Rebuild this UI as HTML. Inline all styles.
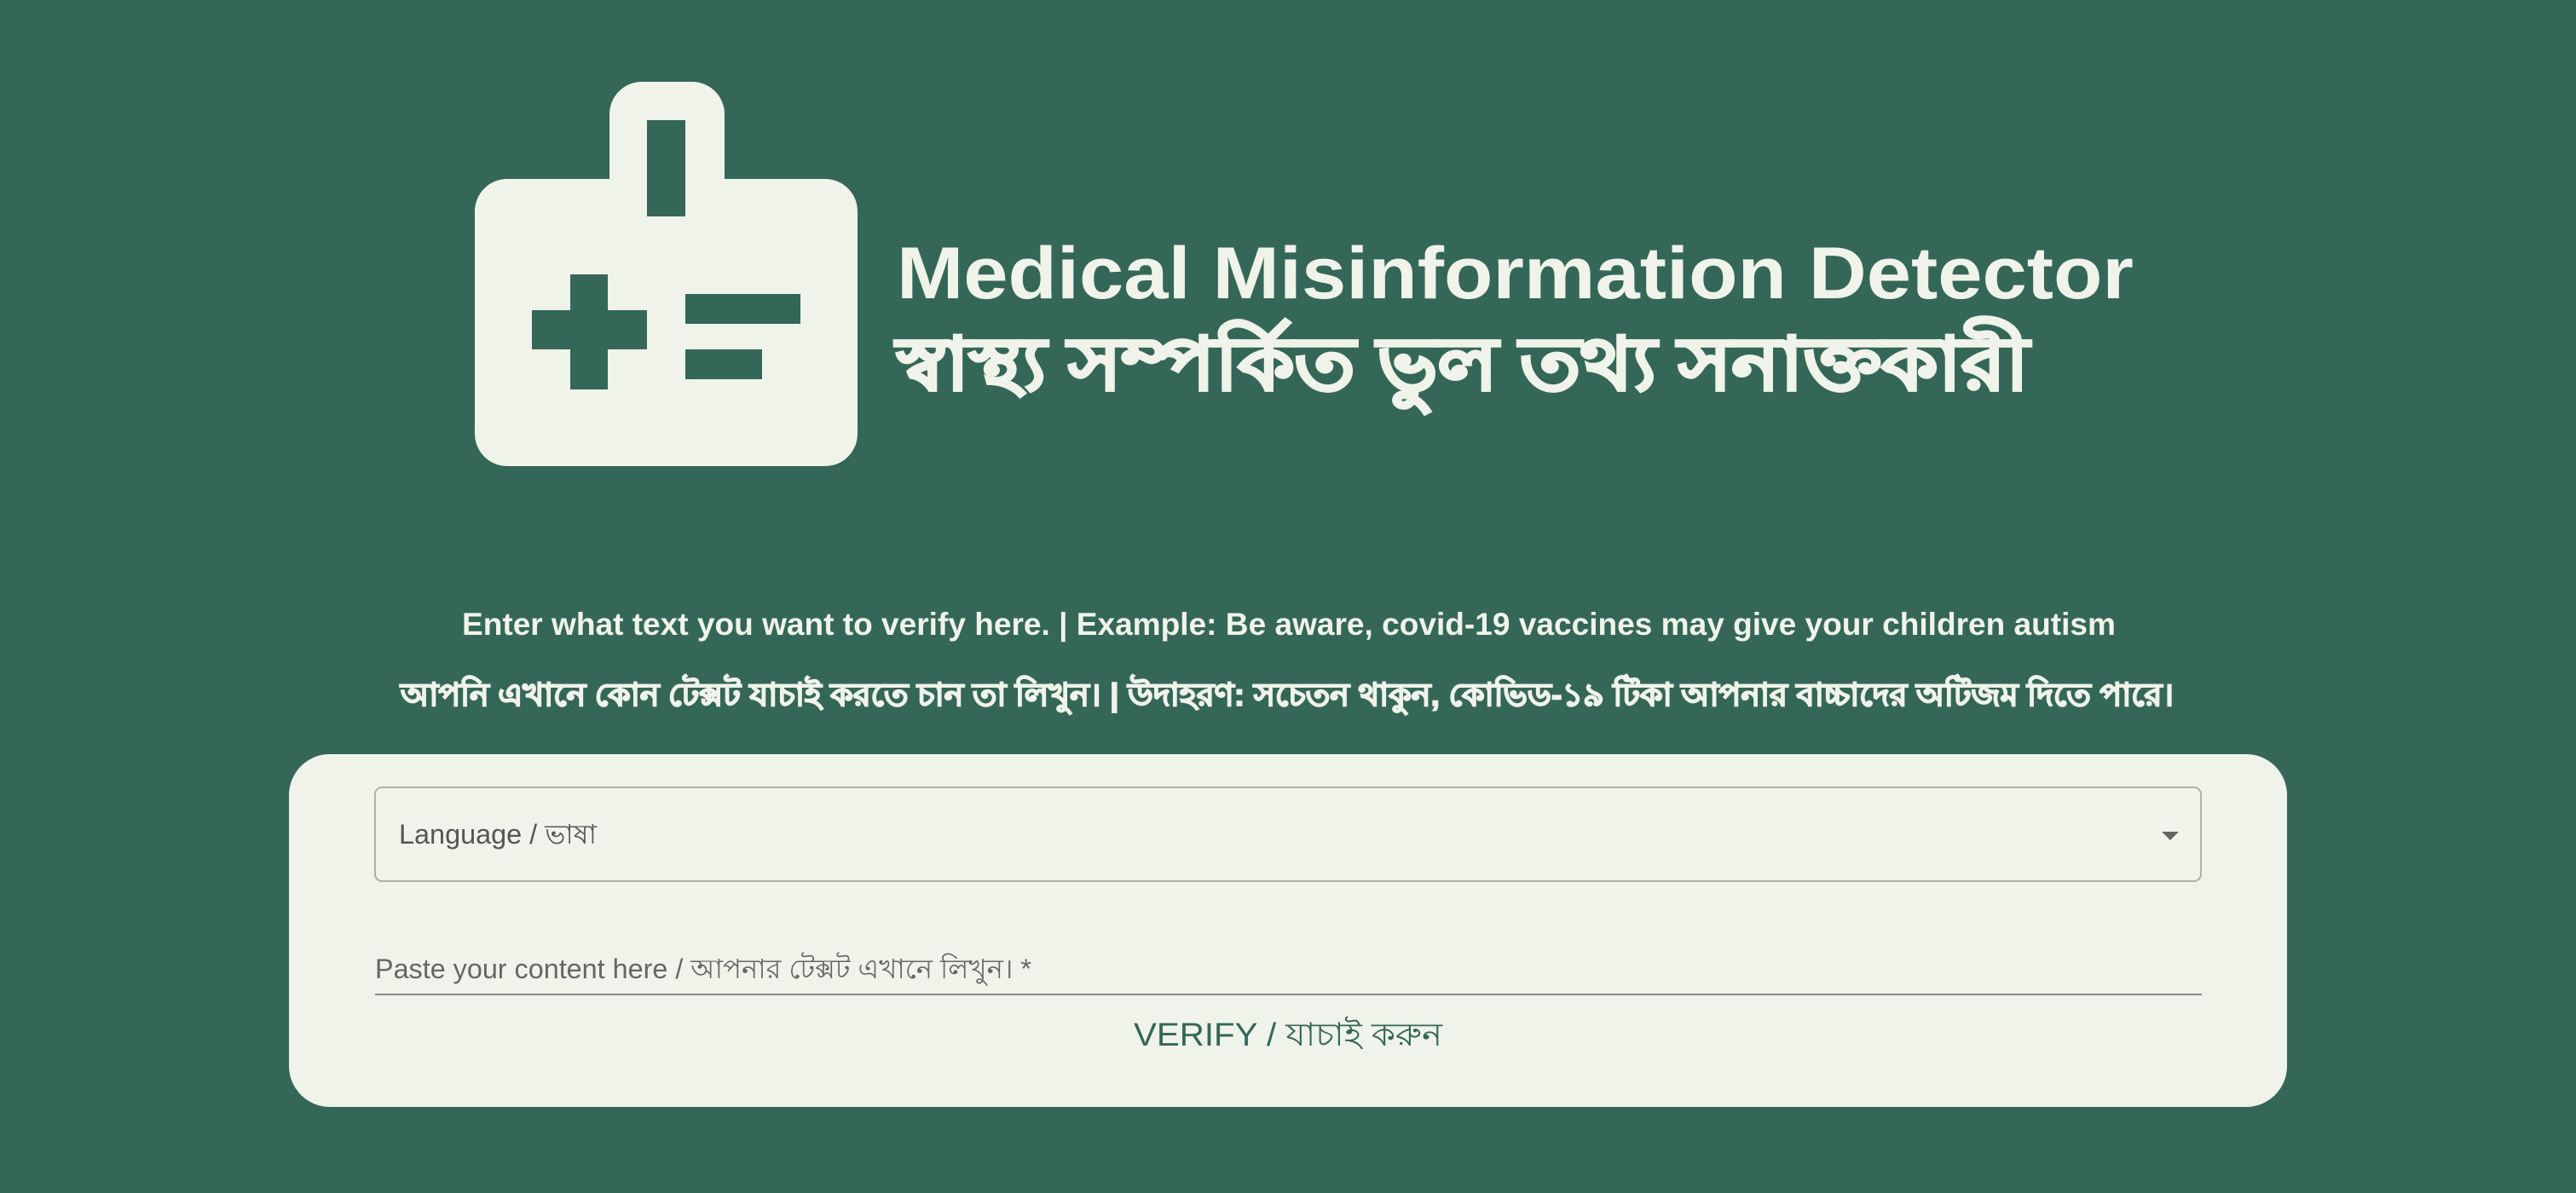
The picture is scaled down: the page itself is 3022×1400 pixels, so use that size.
<!DOCTYPE html>
<html><head><meta charset="utf-8"><style>
html,body{margin:0;padding:0;background:#356759;width:3022px;height:1400px;overflow:hidden}
svg{display:block}
text{font-family:"Liberation Sans","Noto Sans CJK SC",sans-serif}
</style></head><body>
<svg width="3022" height="1400" viewBox="0 0 3022 1400" xmlns="http://www.w3.org/2000/svg">
<rect width="3022" height="1400" fill="#356759"/>
<g fill="#f0f3e9">
<path d="M753 96 H812 A38 38 0 0 1 850 134 V215 H715 V134 A38 38 0 0 1 753 96 Z"/>
<rect x="557" y="210" width="449" height="337" rx="38"/>
</g>
<g fill="#356759">
<rect x="759" y="141" width="45" height="113"/>
<rect x="669" y="322" width="44" height="135"/>
<rect x="624" y="364" width="135" height="46"/>
<rect x="804" y="345" width="135" height="35"/>
<rect x="804" y="410" width="90" height="35"/>
</g>
<text x="1052" y="350" font-size="86" font-weight="bold" fill="#f0f3e9" textLength="1451" lengthAdjust="spacingAndGlyphs">Medical Misinformation Detector</text>
<text x="1052" y="457" font-size="86" font-weight="bold" fill="#f0f3e9" stroke="#f0f3e9" stroke-width="3" textLength="1328" lengthAdjust="spacingAndGlyphs">স্বাস্থ্য সম্পর্কিত ভুল তথ্য সনাক্তকারী</text>
<text x="542" y="745" font-size="37" font-weight="bold" fill="#f0f3e9" textLength="1940" lengthAdjust="spacingAndGlyphs">Enter what text you want to verify here. | Example: Be aware, covid-19 vaccines may give your children autism</text>
<text x="470" y="828" font-size="37" font-weight="bold" fill="#f0f3e9" stroke="#f0f3e9" stroke-width="1.5" textLength="2080" lengthAdjust="spacingAndGlyphs">আপনি এখানে কোন টেক্সট যাচাই করতে চান তা লিখুন। | উদাহরণ: সচেতন থাকুন, কোভিড-১৯ টিকা আপনার বাচ্চাদের অটিজম দিতে পারে।</text>
<rect x="339" y="885" width="2344" height="414" rx="48" fill="#f0f3e9"/>
<rect x="440" y="924" width="2142" height="110" rx="8" fill="none" stroke="#aeb0aa" stroke-width="2"/>
<text x="468" y="990" font-size="32" fill="#555" textLength="232" lengthAdjust="spacingAndGlyphs">Language / ভাষা</text>
<path d="M2536 976 H2556 L2546 986 Z" fill="#666"/>
<text x="440" y="1148" font-size="32" fill="#666" textLength="770" lengthAdjust="spacingAndGlyphs">Paste your content here / আপনার টেক্সট এখানে লিখুন। *</text>
<rect x="440" y="1166" width="2143" height="2" fill="#888b85"/>
<text x="1511" y="1227" font-size="38" fill="#356759" text-anchor="middle" textLength="362" lengthAdjust="spacingAndGlyphs">VERIFY / যাচাই করুন</text>
</svg>
</body></html>
